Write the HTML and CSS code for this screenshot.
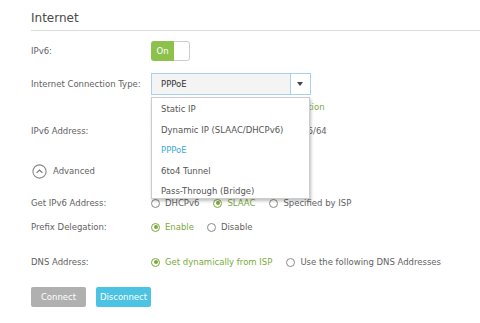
FILE: index.html
```html
<!DOCTYPE html>
<html lang="en">
<head>
    <meta charset="UTF-8">
    <title>Internet</title>
    <link rel="stylesheet" href="styles.css">
</head>
<body>
    <div class="page">
        <h2 class="title">Internet</h2>

        <div class="row row-ipv6">
            <div class="label">IPv6:</div>
            <div class="toggle"><span class="toggle-on">On</span><span class="toggle-knob"></span></div>
        </div>

        <div class="row row-type">
            <div class="label">Internet Connection Type:</div>
            <div class="select-wrap">
                <div class="select">
                    <span class="select-value">PPPoE</span>
                    <span class="select-arrow"></span>
                </div>
                <ul class="dropdown">
                    <li>Static IP</li>
                    <li>Dynamic IP (SLAAC/DHCPv6)</li>
                    <li class="selected">PPPoE</li>
                    <li>6to4 Tunnel</li>
                    <li>Pass-Through (Bridge)</li>
                </ul>
            </div>
        </div>

        <div class="row row-status">
            <div class="label"></div>
            <div class="status-text">Connected to the IPv6 PPPoE Connection</div>
        </div>

        <div class="row row-addr">
            <div class="label">IPv6 Address:</div>
            <div class="value">2001:db8:a0b:12f0:1:c0a8:3a41:ab15/64</div>
        </div>

        <div class="row row-adv">
            <span class="adv-icon">
                <svg width="15" height="15" viewBox="0 0 15 15"><circle cx="7.5" cy="7.5" r="6.6" fill="none" stroke="#8a8a8a" stroke-width="1.1"/><path d="M4.6 8.9 L7.5 6 L10.4 8.9" fill="none" stroke="#777" stroke-width="1.2"/></svg>
            </span>
            <span class="adv-text">Advanced</span>
        </div>

        <div class="row row-get">
            <div class="label">Get IPv6 Address:</div>
            <label class="radio"><span class="dot"></span>DHCPv6</label>
            <label class="radio checked"><span class="dot"></span>SLAAC</label>
            <label class="radio"><span class="dot"></span>Specified by ISP</label>
        </div>

        <div class="row row-prefix">
            <div class="label">Prefix Delegation:</div>
            <label class="radio checked"><span class="dot"></span>Enable</label>
            <label class="radio"><span class="dot"></span>Disable</label>
        </div>

        <div class="row row-dns">
            <div class="label">DNS Address:</div>
            <label class="radio checked"><span class="dot"></span>Get dynamically from ISP</label>
            <label class="radio"><span class="dot"></span>Use the following DNS Addresses</label>
        </div>

        <div class="buttons">
            <button class="btn btn-connect">Connect</button>
            <button class="btn btn-disconnect">Disconnect</button>
        </div>
    </div>
</body>
</html>
```

FILE: styles.css
```css
body { margin: 0; background: #fff; font-family: "DejaVu Sans", Verdana, sans-serif; font-size: 8.5px; color: #626262; }
.page { padding-left: 31px; }
.title { margin: 0; padding: 10px 0 4px; font-size: 12px; line-height: 16px; font-weight: normal; color: #4a4a4a; border-bottom: 1px solid #dcdcdc; }
.row { display: flex; align-items: center; height: 14px; }
.label { width: 120px; flex-shrink: 0; }
.row-ipv6 { margin-top: 10px; height: 20px; }
.row-type { margin-top: 12px; height: 22px; }
.row-status { margin-top: 5px; }
.row-addr { margin-top: 10px; }
.row-adv { margin-top: 25px; height: 16px; }
.row-get { margin-top: 17px; }
.row-prefix { margin-top: 10px; }
.row-dns { margin-top: 21px; }

.toggle { display: flex; width: 39px; height: 20px; border-radius: 3px; overflow: hidden; box-sizing: border-box; }
.toggle-on { width: 23px; background: #8cc14c; color: #fff; line-height: 20px; text-align: center; font-size: 8.5px; }
.toggle-knob { flex: 1; background: #fff; border: 1px solid #ccc; border-left: none; border-radius: 0 3px 3px 0; }

.select-wrap { position: relative; }
.select { display: flex; width: 160px; height: 22px; box-sizing: border-box; border: 1px solid #a9d3ea; background: #f4f4f4; }
.select-value { flex: 1; padding-left: 9px; line-height: 20px; color: #333; }
.select-arrow { position: relative; width: 19px; background: #fff; border-left: 1px solid #a9d3ea; }
.select-arrow::after { content: ""; position: absolute; left: 6px; top: 8px; border-left: 3.5px solid transparent; border-right: 3.5px solid transparent; border-top: 4px solid #444; }
.dropdown { position: absolute; left: 0; top: 24px; width: 159px; height: 102px; margin: 0; padding: 1px 0 0; list-style: none; background: #fff; border: 1px solid #ccc; box-sizing: border-box; box-shadow: 1px 2px 3px rgba(0,0,0,0.25); z-index: 2; }
.dropdown li { height: 20.5px; line-height: 20.5px; padding-left: 9px; color: #555; }
.dropdown li.selected { color: #3fa9d6; }

.status-text { color: #7aab3b; white-space: nowrap; }
.value { white-space: nowrap; }

.adv-icon { width: 15px; height: 15px; margin-left: 1px; }
.adv-text { margin-left: 6px; }

.radio { display: flex; align-items: center; margin-right: 14px; white-space: nowrap; }
.radio .dot { width: 9px; height: 9px; box-sizing: border-box; border: 1px solid #8a8a8a; border-radius: 50%; margin-right: 5px; position: relative; }
.radio.checked { color: #7aab3b; }
.radio.checked .dot { border-color: #7aab3b; }
.radio.checked .dot::after { content: ""; position: absolute; left: 1.5px; top: 1.5px; width: 4px; height: 4px; border-radius: 50%; background: #7aab3b; }
.row-prefix .radio { margin-right: 13px; }

.buttons { display: flex; gap: 10px; margin-top: 18px; }
.btn { width: 55px; height: 20px; border: none; border-radius: 2px; color: #fff; font-family: "DejaVu Sans", Verdana, sans-serif; font-size: 8.5px; padding: 0; }
.btn-connect { background: #b0b0b0; }
.btn-disconnect { background: #4cc3e3; }
```
